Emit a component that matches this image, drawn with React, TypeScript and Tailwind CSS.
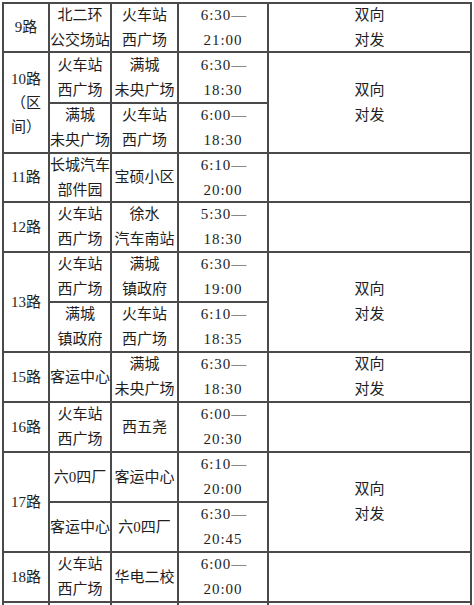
import React from "react";

type Cell = {
  text?: string[];
  rowSpan?: number;
  kind?: "route" | "cn" | "time" | "note";
};

const CN = '"Liberation Serif", "Noto Sans CJK SC", serif';

function C({ lines, kind, rowSpan }: { lines?: string[]; kind: string; rowSpan?: number }) {
  const span =
    rowSpan === 3 ? "row-span-3" : rowSpan === 2 ? "row-span-2" : "row-span-1";
  const base =
    "bg-white flex flex-col items-center justify-center text-center text-[#1e1e1e] overflow-hidden " +
    span;
  if (kind === "time") {
    return (
      <div className={base + " text-[15px] leading-[25px] tracking-[1px]"} style={{ fontFamily: '"Liberation Serif", serif' }}>
        {lines?.map((l, i) => (
          <div key={i} className={i === 0 ? "pl-[2px]" : ""}>{l}</div>
        ))}
      </div>
    );
  }
  return (
    <div className={base + " text-[15px] leading-[25px] whitespace-nowrap"} style={{ fontFamily: CN }}>
      {lines?.map((l, i) => (
        <div key={i}>{l}</div>
      ))}
    </div>
  );
}

export default function App() {
  return (
    <div className="w-[474px] h-[605px] overflow-hidden bg-white">
      <div
        className="ml-[2px] mt-[2px] w-fit grid gap-[2px] p-[2px] bg-[#4a4a4a] grid-cols-[44px_60px_65px_88px_201px] grid-rows-[47px_49px_48px_47px_48px_48px_48px_48px_48px_48px_48px_48px_48px]"
      >
        {/* 9路 */}
        <C kind="cn" lines={["9路"]} />
        <C kind="cn" lines={["北二环", "公交场站"]} />
        <C kind="cn" lines={["火车站", "西广场"]} />
        <C kind="time" lines={["6:30—", "21:00"]} />
        <C kind="note" lines={["双向", "对发"]} />

        {/* 10路 */}
        <div className="row-span-2 bg-white flex flex-col items-center justify-center text-center text-[#1e1e1e] text-[15px] leading-[24px] whitespace-nowrap" style={{ fontFamily: CN }}>
          <div>10路</div>
          <div>（区</div>
          <div>间）</div>
        </div>
        <C kind="cn" lines={["火车站", "西广场"]} />
        <C kind="cn" lines={["满城", "未央广场"]} />
        <C kind="time" lines={["6:30—", "18:30"]} />
        <C kind="note" rowSpan={2} lines={["双向", "对发"]} />
        <C kind="cn" lines={["满城", "未央广场"]} />
        <C kind="cn" lines={["火车站", "西广场"]} />
        <C kind="time" lines={["6:00—", "18:30"]} />

        {/* 11路 */}
        <C kind="cn" lines={["11路"]} />
        <C kind="cn" lines={["长城汽车", "部件园"]} />
        <C kind="cn" lines={["宝硕小区"]} />
        <C kind="time" lines={["6:10—", "20:00"]} />
        <C kind="note" />

        {/* 12路 */}
        <C kind="cn" lines={["12路"]} />
        <C kind="cn" lines={["火车站", "西广场"]} />
        <C kind="cn" lines={["徐水", "汽车南站"]} />
        <C kind="time" lines={["5:30—", "18:30"]} />
        <C kind="note" />

        {/* 13路 */}
        <C kind="cn" rowSpan={2} lines={["13路"]} />
        <C kind="cn" lines={["火车站", "西广场"]} />
        <C kind="cn" lines={["满城", "镇政府"]} />
        <C kind="time" lines={["6:30—", "19:00"]} />
        <C kind="note" rowSpan={2} lines={["双向", "对发"]} />
        <C kind="cn" lines={["满城", "镇政府"]} />
        <C kind="cn" lines={["火车站", "西广场"]} />
        <C kind="time" lines={["6:10—", "18:35"]} />

        {/* 15路 */}
        <C kind="cn" lines={["15路"]} />
        <C kind="cn" lines={["客运中心"]} />
        <C kind="cn" lines={["满城", "未央广场"]} />
        <C kind="time" lines={["6:30—", "18:30"]} />
        <C kind="note" lines={["双向", "对发"]} />

        {/* 16路 */}
        <C kind="cn" lines={["16路"]} />
        <C kind="cn" lines={["火车站", "西广场"]} />
        <C kind="cn" lines={["西五尧"]} />
        <C kind="time" lines={["6:00—", "20:30"]} />
        <C kind="note" />

        {/* 17路 */}
        <C kind="cn" rowSpan={2} lines={["17路"]} />
        <C kind="cn" lines={["六0四厂"]} />
        <C kind="cn" lines={["客运中心"]} />
        <C kind="time" lines={["6:10—", "20:00"]} />
        <C kind="note" rowSpan={2} lines={["双向", "对发"]} />
        <C kind="cn" lines={["客运中心"]} />
        <C kind="cn" lines={["六0四厂"]} />
        <C kind="time" lines={["6:30—", "20:45"]} />

        {/* 18路 */}
        <C kind="cn" lines={["18路"]} />
        <C kind="cn" lines={["火车站", "西广场"]} />
        <C kind="cn" lines={["华电二校"]} />
        <C kind="time" lines={["6:00—", "20:00"]} />
        <C kind="note" />

        {/* continuation */}
        <C kind="cn" />
        <C kind="cn" />
        <C kind="cn" />
        <C kind="time" />
        <C kind="note" />
      </div>
    </div>
  );
}
